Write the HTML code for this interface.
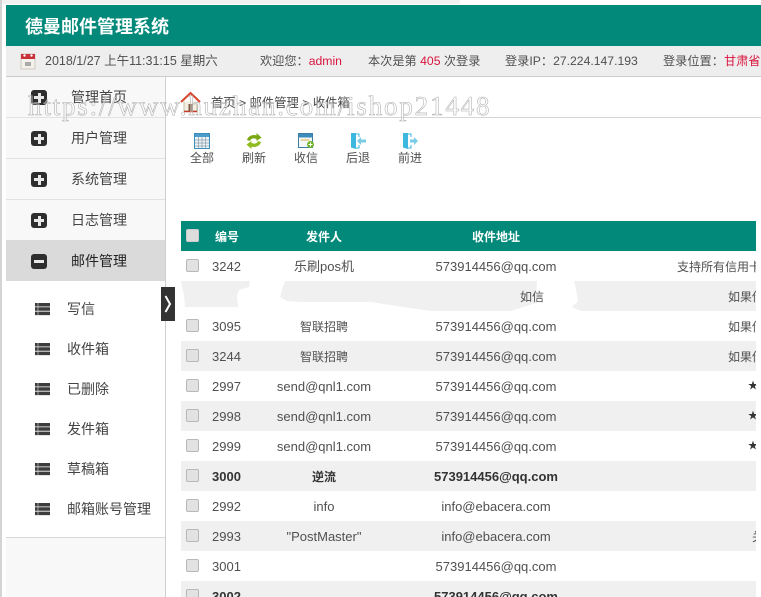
<!DOCTYPE html>
<html><head><meta charset="utf-8">
<style>
html,body{margin:0;padding:0;background:#fff}
#p{position:relative;width:761px;height:597px;overflow:hidden;background:#fff;font-family:"Liberation Sans","Noto Sans CJK SC",sans-serif;font-size:13px;color:#505050}
#p div,#p svg{position:absolute}
.t{white-space:nowrap;line-height:20px;height:20px}
.c{text-align:center}
.r{color:#d9153e}
.m{font-size:14px;color:#444}
.h{font-size:12.2px}
.z{font-size:12px}
.sep{left:6px;width:159px;height:1px;background:#e2e2e2}
.box{left:31px;width:16px;height:15px;background:#2e2e2e;border-radius:3px}
.box i{position:absolute;left:3px;top:6px;width:10px;height:3px;background:#e8e8e8}
.box b{position:absolute;left:6.5px;top:2.5px;width:3px;height:10px;background:#e8e8e8}
.row{left:181px;width:575px;height:30px}
.s{background:#f0f0f0}
.cb{left:186px;width:11px;height:11px;background:#e2e2e2;border:1px solid #b8b8b8;border-radius:2px}
.b{font-weight:bold;color:#333}
.st{font-size:10px;color:#333}
</style></head><body><div id="p">

<div style="left:0;top:0;width:460px;height:4px;background:#f1f1f1"></div>
<div style="left:0;top:0;width:2px;height:597px;background:#d4d4d4"></div>
<div style="left:6px;top:5px;width:755px;height:41px;background:#02897a"></div>
<div class="t" style="left:25px;top:17px;font-size:18px;font-weight:bold;color:#fff">德曼邮件管理系统</div>
<div style="left:6px;top:46px;width:755px;height:30px;background:#eee;border-bottom:1px solid #ccc"></div>

<svg style="left:20px;top:53px" width="16" height="17" viewBox="0 0 16 17"><rect x="1" y="1" width="14" height="15" fill="#f4f1ea" stroke="#c9c3b8" stroke-width=".8"/><rect x="1" y="1" width="14" height="5" fill="#c8313a"/><circle cx="4.5" cy="2.5" r="1.2" fill="#fff"/><circle cx="11.5" cy="2.5" r="1.2" fill="#fff"/><rect x="5" y="9" width="6" height="4" fill="#aaa"/></svg>
<div class="t" style="left:45px;top:51px;font-size:12.5px">2018/1/27 上午11:31:15 星期六</div>
<div class="t h" style="left:260px;top:51px">欢迎您：<span class="r">admin</span></div>
<div class="t h" style="left:368px;top:51px">本次是第 <span class="r">405</span> 次登录</div>
<div class="t h" style="left:505px;top:51px">登录IP：27.224.147.193</div>
<div class="t h" style="left:663px;top:51px">登录位置：<span class="r">甘肃省</span></div>

<!-- sidebar -->
<div style="left:6px;top:77px;width:159px;height:520px;background:#f8f8f8"></div>
<div style="left:165px;top:77px;width:1px;height:520px;background:#d0d0d0"></div>
<div class="sep" style="top:117px"></div>
<div class="sep" style="top:158px"></div>
<div class="sep" style="top:199px"></div>
<div style="left:6px;top:240px;width:159px;height:41px;background:#dadada"></div>
<div style="left:6px;top:281px;width:159px;height:256px;background:#fff"></div>
<div style="left:6px;top:537px;width:159px;height:1px;background:#d8d8d8"></div>

<div class="box" style="top:90px"><i></i><b></b></div>
<div class="box" style="top:131px"><i></i><b></b></div>
<div class="box" style="top:172px"><i></i><b></b></div>
<div class="box" style="top:213px"><i></i><b></b></div>
<div class="box" style="top:254px"><i></i></div>
<div class="t m" style="left:71px;top:87px">管理首页</div>
<div class="t m" style="left:71px;top:128px">用户管理</div>
<div class="t m" style="left:71px;top:169px">系统管理</div>
<div class="t m" style="left:71px;top:210px">日志管理</div>
<div class="t m" style="left:71px;top:251px;color:#222">邮件管理</div>

<svg style="left:35px;top:303px" width="16" height="13" viewBox="0 0 16 13"><path d="M0 0h15v3.500H0zM0 4.300h15v3.500H0zM0 8.600h15v3.500H0z" fill="#3d3d3d"/><path d="M3 0v12" stroke="#ddd" stroke-width=".6"/></svg>
<svg style="left:35px;top:343px" width="16" height="13" viewBox="0 0 16 13"><path d="M0 0h15v3.500H0zM0 4.300h15v3.500H0zM0 8.600h15v3.500H0z" fill="#3d3d3d"/><path d="M3 0v12" stroke="#ddd" stroke-width=".6"/></svg>
<svg style="left:35px;top:383px" width="16" height="13" viewBox="0 0 16 13"><path d="M0 0h15v3.500H0zM0 4.300h15v3.500H0zM0 8.600h15v3.500H0z" fill="#3d3d3d"/><path d="M3 0v12" stroke="#ddd" stroke-width=".6"/></svg>
<svg style="left:35px;top:423px" width="16" height="13" viewBox="0 0 16 13"><path d="M0 0h15v3.500H0zM0 4.300h15v3.500H0zM0 8.600h15v3.500H0z" fill="#3d3d3d"/><path d="M3 0v12" stroke="#ddd" stroke-width=".6"/></svg>
<svg style="left:35px;top:463px" width="16" height="13" viewBox="0 0 16 13"><path d="M0 0h15v3.500H0zM0 4.300h15v3.500H0zM0 8.600h15v3.500H0z" fill="#3d3d3d"/><path d="M3 0v12" stroke="#ddd" stroke-width=".6"/></svg>
<svg style="left:35px;top:503px" width="16" height="13" viewBox="0 0 16 13"><path d="M0 0h15v3.500H0zM0 4.300h15v3.500H0zM0 8.600h15v3.500H0z" fill="#3d3d3d"/><path d="M3 0v12" stroke="#ddd" stroke-width=".6"/></svg>
<div class="t m" style="left:67px;top:299px">写信</div>
<div class="t m" style="left:67px;top:339px">收件箱</div>
<div class="t m" style="left:67px;top:379px">已删除</div>
<div class="t m" style="left:67px;top:419px">发件箱</div>
<div class="t m" style="left:67px;top:459px">草稿箱</div>
<div class="t m" style="left:67px;top:499px">邮箱账号管理</div>

<div style="left:161px;top:287px;width:14px;height:34px;background:#333"></div>
<svg style="left:161px;top:287px" width="14" height="34" viewBox="0 0 14 34"><path d="M4.500 9l4.500 8-4.500 8" fill="none" stroke="#fff" stroke-width="2"/></svg>

<!-- breadcrumb -->
<svg style="left:180px;top:91px" width="21" height="22" viewBox="0 0 21 22"><path d="M1 11L10.500 2 20 11" fill="none" stroke="#d8452c" stroke-width="2"/><path d="M4 10.500V20h13v-9.500" fill="#f5efe2" stroke="#b9b09c" stroke-width=".8"/><rect x="8.500" y="13" width="4" height="7" fill="#7a5a44"/><path d="M4 20.500h13" stroke="#c23c28" stroke-width="1.500"/></svg>
<div class="t" style="left:211px;top:93px;font-size:12.300px;color:#444">首页 &gt; 邮件管理 &gt; 收件箱</div>
<div style="left:181px;top:117px;width:580px;height:1px;background:#d6d6d6"></div>

<!-- toolbar -->
<svg style="left:194px;top:133px" width="16" height="16" viewBox="0 0 16 16"><rect x=".5" y=".5" width="15" height="15" fill="#eef5fa" stroke="#3d8dbb"/><rect x="1" y="1" width="14" height="3" fill="#4a9ccb"/><path d="M1 7h14M1 10h14M1 13h14M4.500 4v11M8 4v11M11.500 4v11" stroke="#8a9aa5" stroke-width=".7"/></svg>
<svg style="left:246px;top:133px" width="16" height="16" viewBox="0 0 16 16"><path d="M1 7C2 3 7 1 10.500 2.500L10.500 0 15.500 4.500 10.500 8V6C8 5 5 5 4 8z" fill="#7aa812"/><path d="M15 9C14 13 9 15 5.500 13.500V16L.5 11.500 5.500 8v2C8 11 11 11 12 8z" fill="#8fbc1c"/></svg>
<svg style="left:298px;top:133px" width="17" height="16" viewBox="0 0 17 16"><rect x=".5" y=".5" width="14" height="14" fill="#f4f8fb" stroke="#3d7da5"/><rect x="1" y="1" width="13" height="3.500" fill="#3d8dbb"/><path d="M2.500 7h9" stroke="#e0b040"/><circle cx="12.500" cy="11.500" r="3.500" fill="#72b52a"/><path d="M10.500 11.500h4M12.500 9.500v4" stroke="#fff"/></svg>
<svg style="left:350px;top:133px" width="17" height="16" viewBox="0 0 17 16"><path d="M1 0h5v16l-5-1.500z" fill="#3bb7e0"/><path d="M6 1h3v3M6 15h3v-3" fill="none" stroke="#3bb7e0"/><path d="M16 6.500h-5V4l-4 4 4 4V9.500h5z" fill="#79cbe6"/></svg>
<svg style="left:402px;top:133px" width="17" height="16" viewBox="0 0 17 16"><path d="M1 0h5v16l-5-1.500z" fill="#3bb7e0"/><path d="M6 1h3v3M6 15h3v-3" fill="none" stroke="#3bb7e0"/><path d="M8 6.500h4V4l4 4-4 4V9.500H8z" fill="#79cbe6"/></svg>
<div class="t c z" style="left:182px;top:148px;width:40px">全部</div>
<div class="t c z" style="left:234px;top:148px;width:40px">刷新</div>
<div class="t c z" style="left:286px;top:148px;width:40px">收信</div>
<div class="t c z" style="left:338px;top:148px;width:40px">后退</div>
<div class="t c z" style="left:390px;top:148px;width:40px">前进</div>

<!-- table -->
<div class="row" style="top:221px;background:#02897a"></div>
<div class="cb" style="top:229px;background:#ddd;border-color:#ccc"></div>
<div class="t c" style="left:207px;top:227px;width:40px;font-size:12px;font-weight:bold;color:#fff">编号</div>
<div class="t c" style="left:284px;top:227px;width:80px;font-size:12px;font-weight:bold;color:#fff">发件人</div>
<div class="t c" style="left:456px;top:227px;width:80px;font-size:12px;font-weight:bold;color:#fff">收件地址</div>

<div class="row s" style="top:341px"></div>
<div class="row s" style="top:401px"></div>
<div class="row s" style="top:461px"></div>
<div class="row s" style="top:521px"></div>
<div class="row s" style="top:581px"></div>

<svg style="left:181px;top:281px" width="575" height="30" viewBox="0 0 575 30"><path d="M0 0H69L68 6 58 9 56 14 57 26H4L3 14 1 6z" fill="#f0f0f0"/><path d="M104 0H356L355 22 330 30H250L222 26 190 21H120L106 20 99 16 101 9z" fill="#f0f0f0"/><path d="M393 0H575V30H400L391 26 397 20 395 8z" fill="#f0f0f0"/></svg>

<div class="cb" style="top:259px"></div><div class="cb" style="top:319px"></div><div class="cb" style="top:349px"></div><div class="cb" style="top:379px"></div><div class="cb" style="top:409px"></div><div class="cb" style="top:439px"></div><div class="cb" style="top:469px"></div><div class="cb" style="top:499px"></div><div class="cb" style="top:529px"></div><div class="cb" style="top:559px"></div><div class="cb" style="top:589px"></div>

<div class="t" style="left:212px;top:257px">3242</div>
<div class="t" style="left:212px;top:317px">3095</div>
<div class="t" style="left:212px;top:347px">3244</div>
<div class="t" style="left:212px;top:377px">2997</div>
<div class="t" style="left:212px;top:407px">2998</div>
<div class="t" style="left:212px;top:437px">2999</div>
<div class="t b" style="left:212px;top:467px">3000</div>
<div class="t" style="left:212px;top:497px">2992</div>
<div class="t" style="left:212px;top:527px">2993</div>
<div class="t" style="left:212px;top:557px">3001</div>
<div class="t b" style="left:212px;top:587px">3002</div>

<div class="t c" style="left:264px;top:257px;width:120px">乐刷pos机</div>
<div class="t c z" style="left:264px;top:317px;width:120px">智联招聘</div>
<div class="t c z" style="left:264px;top:347px;width:120px">智联招聘</div>
<div class="t c" style="left:264px;top:377px;width:120px">send@qnl1.com</div>
<div class="t c" style="left:264px;top:407px;width:120px">send@qnl1.com</div>
<div class="t c" style="left:264px;top:437px;width:120px">send@qnl1.com</div>
<div class="t c b z" style="left:264px;top:467px;width:120px">逆流</div>
<div class="t c" style="left:264px;top:497px;width:120px">info</div>
<div class="t c" style="left:264px;top:527px;width:120px">"PostMaster"</div>

<div class="t c" style="left:426px;top:257px;width:140px">573914456@qq.com</div>
<div class="t c z" style="left:462px;top:287px;width:140px">如信</div>
<div class="t c" style="left:426px;top:317px;width:140px">573914456@qq.com</div>
<div class="t c" style="left:426px;top:347px;width:140px">573914456@qq.com</div>
<div class="t c" style="left:426px;top:377px;width:140px">573914456@qq.com</div>
<div class="t c" style="left:426px;top:407px;width:140px">573914456@qq.com</div>
<div class="t c" style="left:426px;top:437px;width:140px">573914456@qq.com</div>
<div class="t c b" style="left:426px;top:467px;width:140px">573914456@qq.com</div>
<div class="t c" style="left:426px;top:497px;width:140px">info@ebacera.com</div>
<div class="t c" style="left:426px;top:527px;width:140px">info@ebacera.com</div>
<div class="t c" style="left:426px;top:557px;width:140px">573914456@qq.com</div>
<div class="t c b" style="left:426px;top:587px;width:140px">573914456@qq.com</div>

<div style="left:660px;top:250px;width:96px;height:347px;overflow:hidden">
<div class="t z" style="left:17px;top:7px">支持所有信用卡</div>
<div class="t z" style="left:68px;top:37px">如果你</div>
<div class="t z" style="left:68px;top:67px">如果你</div>
<div class="t z" style="left:68px;top:97px">如果你</div>
<div class="t st" style="left:88px;top:127px">★</div>
<div class="t st" style="left:88px;top:157px">★</div>
<div class="t st" style="left:88px;top:187px">★</div>
<div class="t z" style="left:92px;top:277px">关</div>
</div>

<!-- watermark -->
<div class="t" style="left:28px;top:89px;height:34px;line-height:34px;font-family:'Liberation Serif',serif;font-size:27px;letter-spacing:1.82px;color:rgba(255,255,255,.35);-webkit-text-stroke:.55px #adadad">https://www.huzhan.com/ishop21448</div>

</div></body></html>
